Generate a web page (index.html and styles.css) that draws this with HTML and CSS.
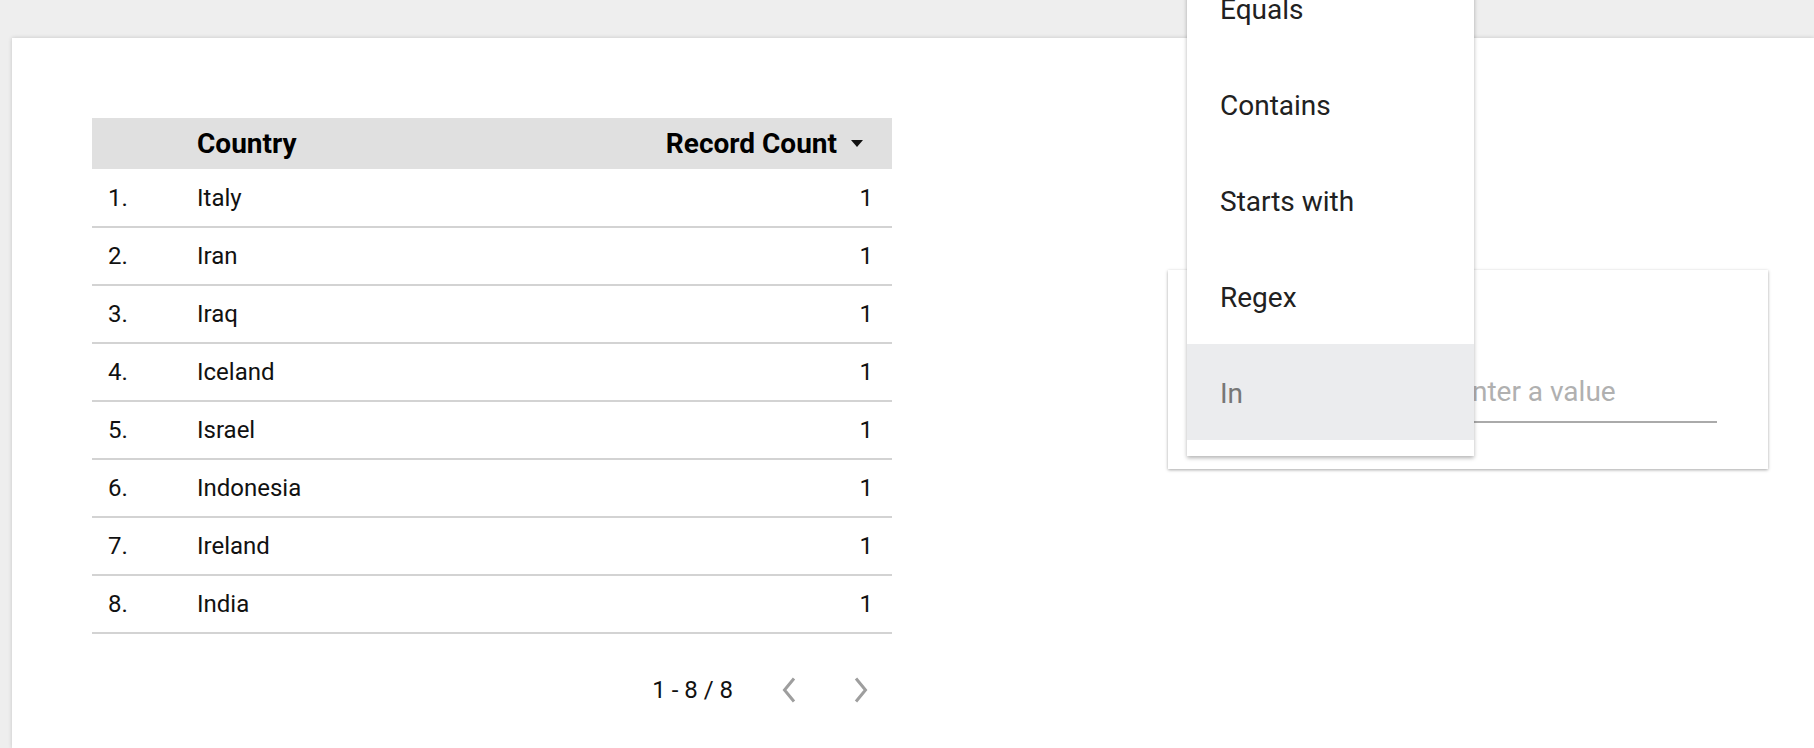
FILE: index.html
```html
<!DOCTYPE html>
<html lang="en">
<head>
<meta charset="utf-8">
<title>Country table</title>
<link rel="stylesheet" href="styles.css">
</head>
<body>
  <div class="topbar"></div>
  <main class="page">
    <section class="report">
      <table class="data-table">
        <thead>
          <tr>
            <th class="col-rank"></th>
            <th class="col-country">Country</th>
            <th class="col-count"><span class="sort-label">Record Count</span><span class="sort-arrow"></span></th>
          </tr>
        </thead>
        <tbody>
          <tr><td class="col-rank">1.</td><td class="col-country">Italy</td><td class="col-count">1</td></tr>
          <tr><td class="col-rank">2.</td><td class="col-country">Iran</td><td class="col-count">1</td></tr>
          <tr><td class="col-rank">3.</td><td class="col-country">Iraq</td><td class="col-count">1</td></tr>
          <tr><td class="col-rank">4.</td><td class="col-country">Iceland</td><td class="col-count">1</td></tr>
          <tr><td class="col-rank">5.</td><td class="col-country">Israel</td><td class="col-count">1</td></tr>
          <tr><td class="col-rank">6.</td><td class="col-country">Indonesia</td><td class="col-count">1</td></tr>
          <tr><td class="col-rank">7.</td><td class="col-country">Ireland</td><td class="col-count">1</td></tr>
          <tr><td class="col-rank">8.</td><td class="col-country">India</td><td class="col-count">1</td></tr>
        </tbody>
      </table>
      <div class="pager">
        <span class="pager-range">1 - 8 / 8</span>
        <button class="pager-btn" aria-label="Previous page">
          <svg width="14" height="26" viewBox="0 0 14 26"><path d="M12 1.5 L2.5 13 L12 24.5" fill="none" stroke="#9e9e9e" stroke-width="3"/></svg>
        </button>
        <button class="pager-btn" aria-label="Next page">
          <svg width="14" height="26" viewBox="0 0 14 26"><path d="M2 1.5 L11.5 13 L2 24.5" fill="none" stroke="#9e9e9e" stroke-width="3"/></svg>
        </button>
      </div>
    </section>
  </main>

  <div class="filter-card">
    <div class="filter-row">
      <div class="operator-field"></div>
      <div class="value-field"><span class="placeholder">Enter a value</span></div>
    </div>
  </div>

  <ul class="menu">
    <li class="menu-item">Equals</li>
    <li class="menu-item">Contains</li>
    <li class="menu-item">Starts with</li>
    <li class="menu-item">Regex</li>
    <li class="menu-item is-active">In</li>
  </ul>
</body>
</html>
```
FILE: styles.css
```css
* { box-sizing: border-box; }

html, body {
  margin: 0;
  padding: 0;
}

body {
  position: relative;
  width: 1814px;
  height: 748px;
  overflow: hidden;
  background: #eeeeee;
  font-family: Roboto, "Noto Sans", Arial, sans-serif;
  color: #111;
}

.topbar {
  height: 38px;
}

.page {
  margin-left: 12px;
  height: 710px;
  background: #ffffff;
  box-shadow: 0 0 4px rgba(0, 0, 0, 0.18);
  padding: 80px 0 0 80px;
}

.report {
  width: 800px;
}

.data-table {
  width: 800px;
  border-collapse: collapse;
  table-layout: fixed;
}

.data-table thead tr {
  background: #e0e0e0;
  height: 51px;
}

.data-table th {
  font-size: 28px;
  font-weight: 700;
  color: #000;
  text-align: left;
  padding: 0;
  vertical-align: middle;
}

.data-table td {
  height: 58px;
  font-size: 24px;
  color: #111;
  padding: 0;
  border-bottom: 2px solid #d3d3d3;
  vertical-align: middle;
}

.col-rank {
  width: 105px;
}

td.col-rank {
  padding-left: 16px;
}

.col-count {
  text-align: right;
}

th.col-count {
  text-align: right;
  padding-right: 29px;
}

td.col-count {
  text-align: right;
  padding-right: 19px;
}

.sort-arrow {
  display: inline-block;
  width: 0;
  height: 0;
  margin-left: 14px;
  vertical-align: middle;
  border-left: 6.5px solid transparent;
  border-right: 6.5px solid transparent;
  border-top: 7px solid #111;
  position: relative;
  top: -2px;
}

.pager {
  display: flex;
  justify-content: flex-end;
  align-items: center;
  height: 60px;
  margin-top: 26px;
  padding-right: 7px;
}

.pager-range {
  font-size: 24px;
  color: #111;
  margin-right: 32px;
}

.pager-btn {
  width: 48px;
  height: 48px;
  border: 0;
  background: transparent;
  padding: 0;
  display: flex;
  align-items: center;
  justify-content: center;
}

.pager-btn + .pager-btn {
  margin-left: 24px;
}

.filter-card {
  position: absolute;
  left: 1168px;
  top: 270px;
  width: 600px;
  height: 199px;
  background: #ffffff;
  box-shadow: 0 1px 3px rgba(0, 0, 0, 0.35);
  display: flex;
  flex-direction: column;
  justify-content: flex-end;
  padding: 0 51px 46px 40px;
}

.filter-row {
  display: flex;
  align-items: flex-end;
  gap: 24px;
}

.operator-field {
  width: 208px;
  height: 47px;
  border-bottom: 2px solid #aaaaaa;
}

.value-field {
  flex: 1;
  line-height: 32px;
  font-size: 28px;
  padding: 0 0 13px 16px;
  border-bottom: 2px solid #aaaaaa;
}

.placeholder {
  color: #b0b0b0;
}

.menu {
  position: absolute;
  left: 1187px;
  top: -40px;
  width: 287px;
  margin: 0;
  padding: 0 0 16px 0;
  list-style: none;
  background: #ffffff;
  box-shadow: 0 2px 4px rgba(0, 0, 0, 0.3);
}

.menu-item {
  height: 96px;
  display: flex;
  align-items: center;
  padding-left: 33px;
  padding-top: 2px;
  font-size: 28px;
  color: #212121;
}

.menu-item.is-active {
  background: #ebecee;
  color: #777777;
}
```
